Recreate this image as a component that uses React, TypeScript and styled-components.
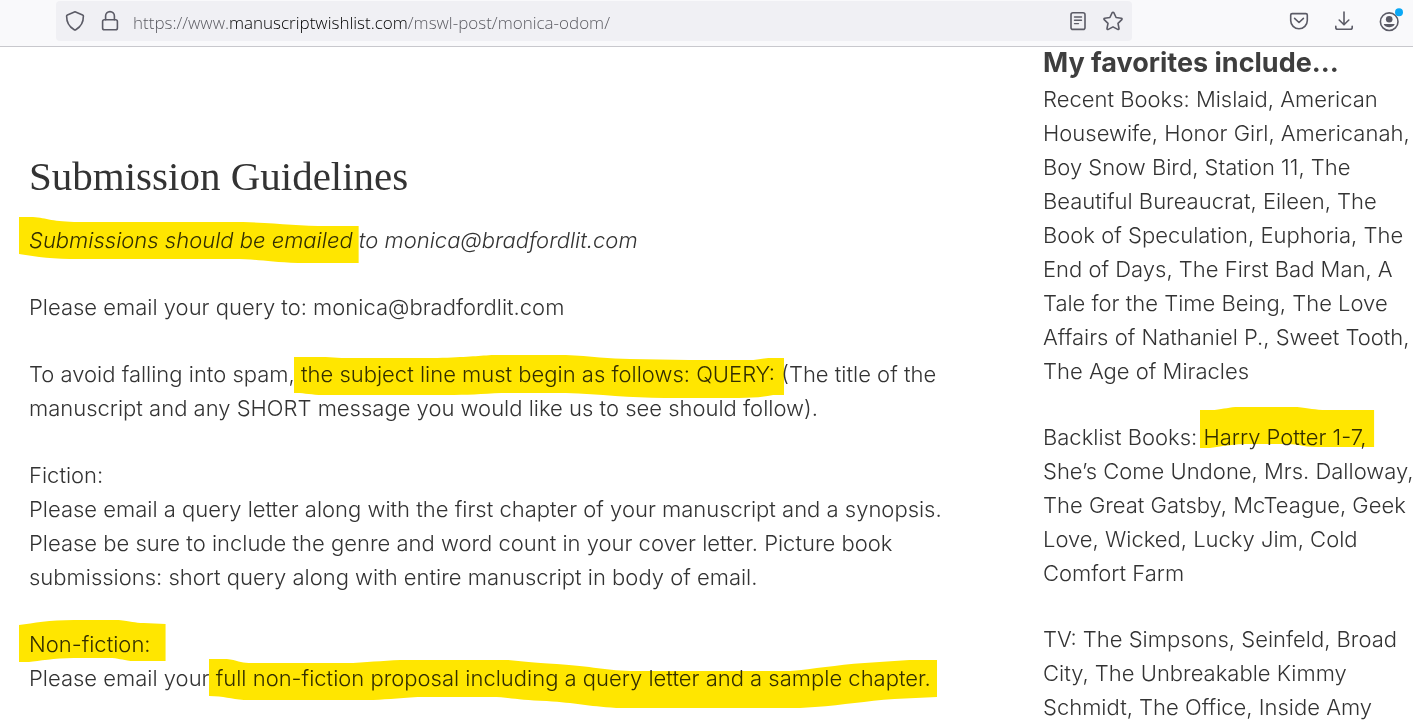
import React from "react";
import styled, { createGlobalStyle } from "styled-components";

const ink = "#333333";
const chrome = "#5b5b66";

const GlobalStyle = createGlobalStyle`
  * { box-sizing: border-box; }
  body { margin: 0; background: #fff; }
`;

const Window = styled.div`
  display: flex;
  flex-direction: column;
  height: 100vh;
  background: #fff;
  color: ${ink};
  font-family: Inter, "Liberation Sans", sans-serif;
`;

const Toolbar = styled.header`
  display: flex;
  align-items: center;
  flex: none;
  padding: 1px 14px 5px 56px;
  background: #f9f9fb;
  border-bottom: 1px solid #c8c8cd;
`;

const AddressBar = styled.div`
  display: flex;
  align-items: center;
  flex: 1;
  min-width: 0;
  height: 40px;
  padding: 0 9px;
  gap: 15px;
  background: #f0f0f4;
  border-radius: 4px;
`;

const AddressInput = styled.input`
  flex: 1;
  min-width: 0;
  height: 34px;
  margin-left: -2px;
  padding: 2px 0 0;
  border: 0;
  outline: 0;
  font: 300 17px/32px "Open Sans", "Noto Sans", sans-serif;
  color: transparent;
  caret-color: #15141a;
  background: linear-gradient(to right, #55555c 97px, #000 97px, #000 275px, #55555c 275px);
  background-clip: text;
  -webkit-background-clip: text;
`;

const ToolbarActions = styled.div`
  display: flex;
  gap: 25px;
  margin-left: 157px;
`;

const IconButton = styled.button`
  display: block;
  flex: none;
  width: 20px;
  height: 20px;
  padding: 0;
  border: 0;
  background: none;
  color: ${chrome};
`;

const Icon = styled.svg`
  display: block;
  width: 20px;
  height: 20px;
  overflow: visible;
  fill: none;
  stroke: currentColor;
  stroke-width: 1.6;
  stroke-linecap: round;
  stroke-linejoin: round;
`;

const Viewport = styled.div`
  display: grid;
  grid-template-columns: minmax(0, 1fr) 370px;
  flex: 1;
  min-height: 0;
  overflow: hidden auto;
  scrollbar-width: none;
`;

const Article = styled.main`
  padding: 105px 29px 0;
`;

const Sidebar = styled.aside`
  white-space: nowrap;
`;

const Title = styled.h1`
  margin: 0 0 23px;
  font: 400 41px/48px "Liberation Serif", serif;
`;

const SideTitle = styled.h2`
  margin: 0 0 3px;
  color: #3e3e3e;
  font-size: 27px;
  font-weight: 700;
  line-height: 32px;
`;

const Paragraph = styled.p<{ $gap: number; $italic?: boolean }>`
  margin: 0 0 ${(p) => p.$gap}px;
  font-size: 22px;
  font-weight: 300;
  font-style: ${(p) => (p.$italic ? "italic" : "normal")};
  line-height: 34px;
  white-space: nowrap;
`;

const Marked = styled.span`
  position: relative;
  display: inline-block;
`;

const Stroke = styled.svg<{ $left: number; $right: number; $top: number; $height: number }>`
  position: absolute;
  left: -${(p) => p.$left}px;
  top: ${(p) => p.$top}px;
  width: calc(100% + ${(p) => p.$left + p.$right}px);
  height: ${(p) => p.$height}px;
  fill: #ffe600;
  mix-blend-mode: multiply;
  pointer-events: none;
`;

type HighlightProps = {
  children: React.ReactNode;
  width: number;
  height: number;
  left: number;
  right: number;
  top: number;
  path: string;
};

function Highlight({ children, width, height, left, right, top, path }: HighlightProps) {
  return (
    <Marked>
      {children}
      <Stroke
        $left={left}
        $right={right}
        $top={top}
        $height={height}
        viewBox={`0 0 ${width} ${height}`}
        preserveAspectRatio="none"
        aria-hidden="true"
      >
        <path d={path} />
      </Stroke>
    </Marked>
  );
}

function Lines({ of }: { of: React.ReactNode[] }) {
  return (
    <>
      {of.map((line, i) => (
        <React.Fragment key={i}>
          {i > 0 && <br />}
          {line}
        </React.Fragment>
      ))}
    </>
  );
}

export default function App() {
  return (
    <Window>
      <GlobalStyle />
      <Toolbar>
        <AddressBar>
          <IconButton aria-label="Tracking protection">
            <Icon viewBox="0 0 20 20">
              <path d="M10 .8 17.6 4c.5.2.8.6.8 1.100 0 6-2.300 10.600-7.300 13.400a2 2 0 0 1-2.200 0C3.900 15.700 1.600 11.100 1.600 5.100c0-.5.3-.9.8-1.100z" />
            </Icon>
          </IconButton>
          <IconButton aria-label="Connection secure">
            <Icon viewBox="0 0 20 20">
              <rect x="2.600" y="8.800" width="14.800" height="10" rx="1.800" />
              <path d="M5.600 8.800V5a4.400 4.400 0 0 1 8.800 0v3.800" />
            </Icon>
          </IconButton>
          <AddressInput
            aria-label="Address"
            spellCheck={false}
            defaultValue="https://www.manuscriptwishlist.com/mswl-post/monica-odom/"
          />
          <IconButton aria-label="Reader view">
            <Icon viewBox="0 0 20 20">
              <rect x="3" y="1.800" width="14" height="16.600" rx="2" />
              <path d="M6.500 6h7M6.500 9.300h7M6.500 12.600h4" strokeWidth="1.400" />
            </Icon>
          </IconButton>
          <IconButton aria-label="Bookmark this page">
            <Icon viewBox="0 0 20 20">
              <path d="M9.200 1.700a.9.9 0 0 1 1.600 0l2.300 4.800 5.200.7c.8.1 1 .9.5 1.500l-3.800 3.600 1 5.200c.1.8-.6 1.300-1.300.9L10 15.900l-4.700 2.500c-.7.4-1.400-.1-1.300-.9l1-5.200-3.800-3.600c-.5-.6-.3-1.400.5-1.500l5.200-.7z" />
            </Icon>
          </IconButton>
        </AddressBar>
        <ToolbarActions>
          <IconButton aria-label="Save to Pocket">
            <Icon viewBox="0 0 20 20">
              <path d="M3.200 2.600h13.600c.9 0 1.500.6 1.500 1.500v5.400a8.300 8.300 0 0 1-16.600 0V4.100c0-.9.6-1.500 1.500-1.500z" />
              <path d="m5.600 7.300 4.400 4.200 4.400-4.200" />
            </Icon>
          </IconButton>
          <IconButton aria-label="Downloads">
            <Icon viewBox="0 0 20 20">
              <path d="M10 1v12.500M5.200 9l4.800 4.800L14.800 9M1.800 15.200v1.300c0 1 .8 1.800 1.800 1.800h12.800c1 0 1.800-.8 1.800-1.800v-1.300" />
            </Icon>
          </IconButton>
          <IconButton aria-label="Account">
            <Icon viewBox="0 0 20 20">
              <circle cx="10.200" cy="10.700" r="8.800" />
              <g fill="currentColor" stroke="none">
                <circle cx="10.200" cy="8.200" r="3.300" />
                <path d="M5.100 12.900h10.200c.3 0 .5.3.3.6-1 1.700-3 2.700-5.400 2.700s-4.400-1-5.400-2.700c-.2-.3 0-.6.3-.6z" />
              </g>
              <circle cx="20" cy="1.200" r="4" fill="#0ba8f5" stroke="none" />
            </Icon>
          </IconButton>
        </ToolbarActions>
      </Toolbar>
      <Viewport>
        <Article>
          <Title>Submission Guidelines</Title>
          <Paragraph $gap={33} $italic>
            <Highlight
              width={341}
              height={46}
              left={10}
              right={6}
              top={-6}
              path="M0 0H14C28 1 34 5 60 5H225C260 6 280 9 310 9H341V46H280C250 45 240 42 215 42H60C35 42 18 40 0 37Z"
            >
              Submissions should be emailed
            </Highlight>{" "}
            to monica@bradfordlit.com
          </Paragraph>
          <Paragraph $gap={33}>Please email your query to: monica@bradfordlit.com</Paragraph>
          <Paragraph $gap={33}>
            To avoid falling into spam,{" "}
            <Highlight
              width={496}
              height={44}
              left={7}
              right={9}
              top={-2}
              path="M0 2H32L48 3H145C175 2 185 1 200 0H275C300 1 320 4 340 4L400 5H465L480 3H496V40H485C475 42 465 43 450 43H375C340 43 310 39 275 38H210C190 39 175 40 155 40H25C15 39 8 38 0 38Z"
            >
              the subject line must begin as follows: QUERY:
            </Highlight>{" "}
            (The title of the
            <br />
            manuscript and any SHORT message you would like us to see should follow).
          </Paragraph>
          <Paragraph $gap={33}>
            <Lines
              of={[
                "Fiction:",
                "Please email a query letter along with the first chapter of your manuscript and a synopsis.",
                "Please be sure to include the genre and word count in your cover letter. Picture book",
                "submissions: short query along with entire manuscript in body of email.",
              ]}
            />
          </Paragraph>
          <Paragraph $gap={0}>
            <Highlight
              width={147}
              height={42}
              left={10}
              right={15}
              top={-7}
              path="M0 5C15 3 30 0 55 0H100C112 1 116 3 125 3L147 4V41H112C103 40 100 38 90 38H55C35 38 20 41 10 42H0Z"
            >
              Non-fiction:
            </Highlight>
            <br />
            Please email your{" "}
            <Highlight
              width={733}
              height={50}
              left={7}
              right={6}
              top={-2}
              path="M0 0H18C28 1 32 4 40 4H145C165 3 180 1 200 1H300C315 2 325 4 350 5C385 7 400 12 430 12H585C610 10 630 6 660 4L705 1H733V38L690 40C660 42 640 46 610 48L595 49H410C380 47 370 44 340 42C310 41 300 38 285 38H210C190 39 175 41 160 41H35C22 40 15 37 0 37Z"
            >
              full non-fiction proposal including a query letter and a sample chapter.
            </Highlight>
          </Paragraph>
        </Article>
        <Sidebar>
          <SideTitle>My favorites include…</SideTitle>
          <Paragraph $gap={32}>
            <Lines
              of={[
                "Recent Books: Mislaid, American",
                "Housewife, Honor Girl, Americanah,",
                "Boy Snow Bird, Station 11, The",
                "Beautiful Bureaucrat, Eileen, The",
                "Book of Speculation, Euphoria, The",
                "End of Days, The First Bad Man, A",
                "Tale for the Time Being, The Love",
                "Affairs of Nathaniel P., Sweet Tooth,",
                "The Age of Miracles",
              ]}
            />
          </Paragraph>
          <Paragraph $gap={32}>
            Backlist Books:{" "}
            <Highlight
              width={179}
              height={41}
              left={3}
              right={8}
              top={-13}
              path="M0 3H15C25 2 30 0 40 0H100C112 1 118 3 130 3H179V40H118C105 40 103 37 90 37H50C35 37 25 39 10 41H0Z"
            >
              Harry Potter 1-7,
            </Highlight>
            <br />
            <Lines
              of={[
                "She’s Come Undone, Mrs. Dalloway,",
                "The Great Gatsby, McTeague, Geek",
                "Love, Wicked, Lucky Jim, Cold",
                "Comfort Farm",
              ]}
            />
          </Paragraph>
          <Paragraph $gap={0}>
            <Lines
              of={[
                "TV: The Simpsons, Seinfeld, Broad",
                "City, The Unbreakable Kimmy",
                "Schmidt, The Office, Inside Amy",
              ]}
            />
          </Paragraph>
        </Sidebar>
      </Viewport>
    </Window>
  );
}
